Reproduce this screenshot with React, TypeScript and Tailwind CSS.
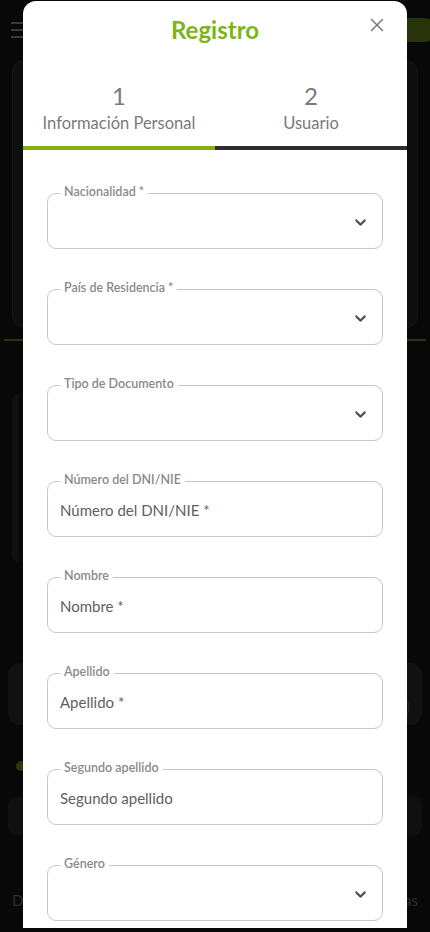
import { ChevronDown, X } from 'lucide-react'

const FIELDS = [
  { label:'Nacionalidad *',      select:true },
  { label:'País de Residencia *',select:true },
  { label:'Tipo de Documento',   select:true },
  { label:'Número del DNI/NIE',  placeholder:'Número del DNI/NIE *' },
  { label:'Nombre',              placeholder:'Nombre *' },
  { label:'Apellido',            placeholder:'Apellido *' },
  { label:'Segundo apellido',    placeholder:'Segundo apellido' },
  { label:'Género',              select:true },
]

function Field({ label, select, placeholder }: { label:string; select?:boolean; placeholder?:string }) {
  return (
    <div className="relative h-[56px] rounded-[9px] border border-[#c6c6c6] flex items-center px-3">
      <span className="absolute left-3 -top-[10px] px-1 bg-white text-[12.5px] leading-4 font-semibold text-[#8a8a8a]">
        {label}
      </span>
      {select ? (
        <div className="ml-auto mr-[1px] mt-[2px] text-[#555]">
          <ChevronDown size={17} strokeWidth={3}/>
        </div>
      ) : (
        <span className="text-[15px] text-[#606060] mt-[2px]">{placeholder}</span>
      )}
    </div>
  )
}

function Background() {
  return (
    <div className="h-[932px] bg-[#080808] flex flex-col px-3 overflow-hidden">
      <div className="flex items-center justify-between h-[60px] -mx-1">
        <div className="flex flex-col gap-[5px] ml-[3px]">
          <div className="w-[12px] h-[2px] bg-[#3a3a3a]"/>
          <div className="w-[12px] h-[2px] bg-[#3a3a3a]"/>
          <div className="w-[12px] h-[2px] bg-[#3a3a3a]"/>
        </div>
        <div className="w-[40px] h-[24px] rounded-full bg-[#28340a] -mr-[14px]"/>
      </div>
      <div className="h-[268px] rounded-xl border border-[#161616] bg-[#0e0e0e]"/>
      <div className="h-[2px] bg-[#2a350b] mt-[11px] -mx-2"/>
      <div className="h-[170px] mt-[52px] rounded-lg border-l-[6px] border-[#101010]"/>
      <div className="h-[62px] mt-[100px] rounded-xl bg-[#111] -mx-1 flex items-end justify-end pr-3 pb-2 text-[#2a2a2a] text-[14px]">e)</div>
      <div className="w-[10px] h-[10px] rounded-full bg-[#2c380c] mt-[36px] ml-[4px]"/>
      <div className="h-[38px] mt-[26px] rounded-lg bg-[#0f0f0f] -mx-1"/>
      <div className="flex justify-between mt-[54px] text-[15px] text-[#2e2e2e]">
        <span>D</span><span>tas</span>
      </div>
    </div>
  )
}

export default function App() {
  return (
    <div className="relative w-[430px] h-[932px] overflow-hidden" style={{fontFamily:'Lato, "Open Sans", sans-serif'}}>
      <Background/>
      <div className="absolute left-[23px] top-[1px] w-[384px] h-[927px] bg-white rounded-t-[13px] overflow-hidden">
        <div className="relative h-[60px] flex items-center justify-center">
          <h1 className="text-[24px] font-bold text-[#7db519] -mt-[3px]">Registro</h1>
          <button className="absolute right-[19px] top-[13px] text-[#7a7a7a]">
            <X size={22} strokeWidth={1.6}/>
          </button>
        </div>
        <div className="grid grid-cols-2 mt-[20px]">
          {[['1','Información Personal'],['2','Usuario']].map(([n,l],i) => (
            <div key={n} className={`flex flex-col items-center border-b-4 ${i===0 ? 'border-[#82b20f]' : 'border-[#2d2d2d]'}`}>
              <div className="text-[24px] leading-[30px] text-[#7a7a7a]">{n}</div>
              <div className="text-[16.5px] leading-5 text-[#7a7a7a] mt-[2px] mb-[13px]">{l}</div>
            </div>
          ))}
        </div>
        <div className="flex flex-col gap-10 px-6 pt-[43px]">
          {FIELDS.map(f => <Field key={f.label} {...f}/>)}
        </div>
      </div>
    </div>
  )
}
